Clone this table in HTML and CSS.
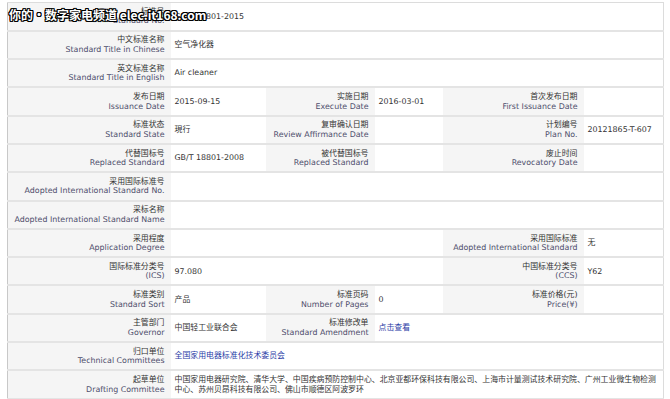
FILE: index.html
```html
<!DOCTYPE html>
<html lang="zh-CN">
<head>
  <meta charset="UTF-8">
  <title>GB/T 18801-2015 空气净化器</title>
  <link rel="stylesheet" href="styles.css">
</head>
<body>

  <div class="page">
    <div class="watermark">你的・数字家电频道 elec.it168.com</div>

    <table class="std-table">
      <colgroup>
        <col class="c-label1">
        <col class="c-val1">
        <col class="c-label2">
        <col class="c-val2">
        <col class="c-label3">
        <col class="c-val3">
      </colgroup>

      <tr>
        <th><span class="cn">标准号</span><span class="en">Standard No.</span></th>
        <td colspan="5">GB/T 18801-2015</td>
      </tr>
      <tr>
        <th><span class="cn">中文标准名称</span><span class="en">Standard Title in Chinese</span></th>
        <td colspan="5">空气净化器</td>
      </tr>
      <tr>
        <th><span class="cn">英文标准名称</span><span class="en">Standard Title in English</span></th>
        <td colspan="5">Air cleaner</td>
      </tr>
      <tr>
        <th><span class="cn">发布日期</span><span class="en">Issuance Date</span></th>
        <td>2015-09-15</td>
        <th><span class="cn">实施日期</span><span class="en">Execute Date</span></th>
        <td>2016-03-01</td>
        <th><span class="cn">首次发布日期</span><span class="en">First Issuance Date</span></th>
        <td></td>
      </tr>
      <tr>
        <th><span class="cn">标准状态</span><span class="en">Standard State</span></th>
        <td>現行</td>
        <th><span class="cn">复审确认日期</span><span class="en">Review Affirmance Date</span></th>
        <td></td>
        <th><span class="cn">计划编号</span><span class="en">Plan No.</span></th>
        <td>20121865-T-607</td>
      </tr>
      <tr>
        <th><span class="cn">代替国标号</span><span class="en">Replaced Standard</span></th>
        <td>GB/T 18801-2008</td>
        <th><span class="cn">被代替国标号</span><span class="en">Replaced Standard</span></th>
        <td></td>
        <th><span class="cn">废止时间</span><span class="en">Revocatory Date</span></th>
        <td></td>
      </tr>
      <tr>
        <th><span class="cn">采用国际标准号</span><span class="en">Adopted International Standard No.</span></th>
        <td colspan="5"></td>
      </tr>
      <tr>
        <th><span class="cn">采标名称</span><span class="en">Adopted International Standard Name</span></th>
        <td colspan="5"></td>
      </tr>
      <tr>
        <th><span class="cn">采用程度</span><span class="en">Application Degree</span></th>
        <td colspan="3"></td>
        <th><span class="cn">采用国际标准</span><span class="en">Adopted International Standard</span></th>
        <td>无</td>
      </tr>
      <tr>
        <th><span class="cn">国际标准分类号</span><span class="en">(ICS)</span></th>
        <td colspan="3">97.080</td>
        <th><span class="cn">中国标准分类号</span><span class="en">(CCS)</span></th>
        <td>Y62</td>
      </tr>
      <tr>
        <th><span class="cn">标准类别</span><span class="en">Standard Sort</span></th>
        <td>产品</td>
        <th><span class="cn">标准页码</span><span class="en">Number of Pages</span></th>
        <td>0</td>
        <th><span class="cn">标准价格(元)</span><span class="en">Price(¥)</span></th>
        <td></td>
      </tr>
      <tr>
        <th><span class="cn">主管部门</span><span class="en">Governor</span></th>
        <td>中国轻工业联合会</td>
        <th><span class="cn">标准修改单</span><span class="en">Standard Amendment</span></th>
        <td colspan="3"><a href="#">点击查看</a></td>
      </tr>
      <tr>
        <th><span class="cn">归口单位</span><span class="en">Technical Committees</span></th>
        <td colspan="5"><a href="#">全国家用电器标准化技术委员会</a></td>
      </tr>
      <tr>
        <th><span class="cn">起草单位</span><span class="en">Drafting Committee</span></th>
        <td colspan="5" class="long">中国家用电器研究院、清华大学、中国疾病预防控制中心、北京亚都环保科技有限公司、上海市计量测试技术研究院、广州工业微生物检测中心、苏州贝昂科技有限公司、佛山市顺德区阿波罗环</td>
      </tr>
    </table>
  </div>

</body>
</html>
```

FILE: styles.css
```css
* {
  box-sizing: border-box;
}

body {
  margin: 0;
  background: #fff;
  font-family: "DejaVu Sans", "Noto Sans CJK SC", sans-serif;
  font-size: 7.9px;
  color: #333;
}

.page {
  position: relative;
  padding: 2px 0 0 7px;
}

.watermark {
  position: absolute;
  left: 9px;
  top: 8px;
  font-family: "Noto Sans CJK SC", sans-serif;
  font-size: 12px;
  font-weight: 700;
  line-height: 14px;
  color: #fff;
  text-shadow: 1px 0 0 #000, -1px 0 0 #000, 0 1px 0 #000, 0 -1px 0 #000,
    1px 1px 0 #000, -1px -1px 0 #000, 1px -1px 0 #000, -1px 1px 0 #000;
  white-space: nowrap;
}

.std-table {
  width: 656px;
  border-collapse: collapse;
  table-layout: fixed;
  border-top: 1px solid #dcdcdc;
  border-left: 1px solid #c8c8c8;
  border-right: 1px solid #dcdcdc;
}

.c-label1 { width: 163px; }
.c-val1 { width: 95px; }
.c-label2 { width: 109px; }
.c-val2 { width: 68px; }
.c-label3 { width: 141px; }
.c-val3 { width: 80px; }

.std-table tr {
  height: 28.3px;
}

.std-table th,
.std-table td {
  border-bottom: 2px solid #e4e4e4;
  vertical-align: middle;
  line-height: 9.5px;
}

.std-table th {
  background: #f5f5f5;
  font-weight: normal;
  text-align: right;
  padding: 0 6px 0 2px;
  white-space: nowrap;
}

.std-table td {
  background: #fff;
  padding: 0 3px 0 4px;
}

.cn {
  display: block;
  color: #333;
}

.en {
  display: block;
  color: #4e4e6c;
}

.std-table a {
  color: #2a3ca6;
  text-decoration: none;
}

.std-table td.long {
  line-height: 10px;
}
```
